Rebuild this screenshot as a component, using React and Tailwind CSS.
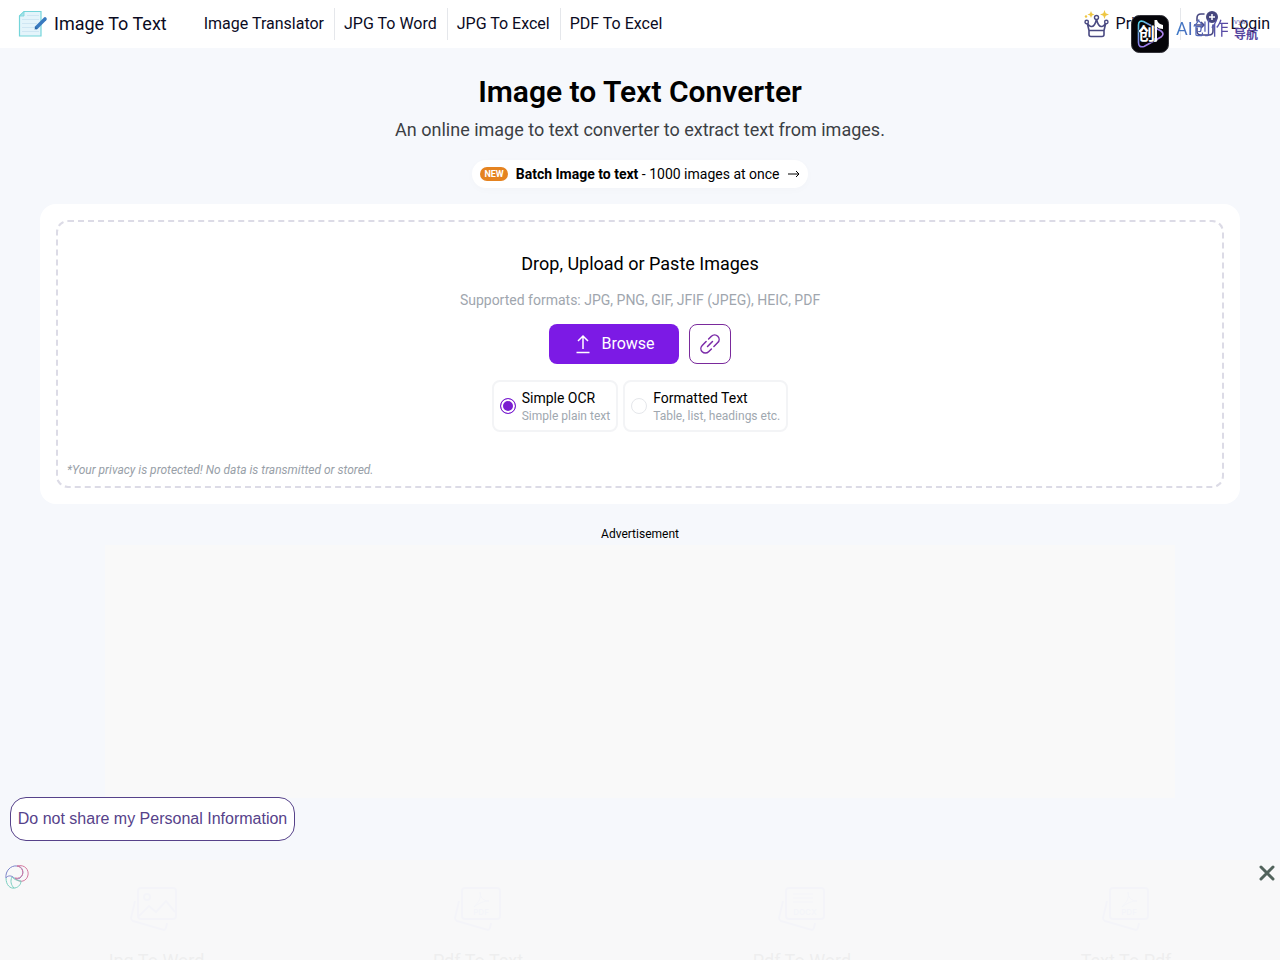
import { useState } from "react";

const navLinks = ["Image Translator", "JPG To Word", "JPG To Excel", "PDF To Excel"];

const modes = [
  { id: "simple", title: "Simple OCR", hint: "Simple plain text" },
  { id: "formatted", title: "Formatted Text", hint: "Table, list, headings etc." },
];

const tools = [
  { name: "Jpg To Word", kind: "image" },
  { name: "Pdf To Text", kind: "pdf" },
  { name: "Pdf To Word", kind: "docx" },
  { name: "Text To Pdf", kind: "pdf" },
];

const LogoIcon = () => (
  <svg viewBox="0 0 30 28" className="h-7 w-[30px]" fill="none" aria-hidden="true">
    <path d="M6 1.500H23V26H1.500V6z" fill="#e4f4fb" stroke="#74d5da" strokeWidth="1.200" />
    <path d="M6 1.500V6H1.500z" fill="#a9e2ea" stroke="#74d5da" strokeWidth="0.800" />
    <path d="M9 5.500h12M4 9.500h17M4 13.500h15M4 17.500h12M4 21.500h17" stroke="#cfe6f3" />
    <path d="M18.500 17.500l8.500-8.500" stroke="#397abf" strokeWidth="3.600" strokeLinecap="round" />
    <path d="M16.500 19.500l3-.8-2-2z" fill="#2a64a4" />
  </svg>
);

const CrownIcon = () => (
  <svg viewBox="0 0 26 28" className="h-7 w-[26px]" fill="none" aria-hidden="true">
    <path
      d="M5 20.500L3 12q2 5 5 4.500 3-.5 4.500-7.500 1.500 7 4.500 7.500 3 .5 5-4.500l-2 8.500zM5 20.500v4q0 2 2 2h11q2 0 2-2v-4"
      stroke="#4a4a82"
      strokeWidth="1.600"
      strokeLinejoin="round"
    />
    <g fill="#fff" stroke="#4a4a82" strokeWidth="1.400">
      <circle cx="2.700" cy="12" r="1.700" />
      <circle cx="12.500" cy="7.500" r="2" />
      <circle cx="22.300" cy="12" r="1.700" />
    </g>
    <g fill="#eec643">
      <path d="M7 1l1 2.500L10.500 4.500 8 5.500 7 8 6 5.500 3.500 4.500 6 3.500z" />
      <path d="M20.500 0l1.200 3.300L25 4.500l-3.300 1.200L20.500 9l-1.200-3.300L16 4.500l3.300-1.200z" />
      <circle cx="2" cy="6.500" r="1.200" />
    </g>
  </svg>
);

const LoginIcon = () => (
  <svg viewBox="0 0 26 28" className="h-7 w-[26px]" fill="none" aria-hidden="true">
    <path
      d="M11 4H8Q4 4 4 8v3M4 18v3q0 4 4 4h8q4 0 4-4v-6"
      stroke="#4a4a82"
      strokeWidth="1.600"
      strokeLinecap="round"
    />
    <path d="M1 15h10m-3-3l3 3-3 3" stroke="#4a4a82" strokeWidth="1.500" />
    <circle cx="19" cy="7" r="6" fill="#46467d" />
    <path d="M19 4v6M16 7h6" stroke="#fff" strokeWidth="1.500" />
  </svg>
);

const BadgeIcon = () => (
  <svg viewBox="0 0 38 38" className="h-[38px] w-[38px]" fill="none" aria-hidden="true">
    <defs>
      <linearGradient id="play" x1="6" y1="6" x2="32" y2="30" gradientUnits="userSpaceOnUse">
        <stop stopColor="#49dce5" />
        <stop offset="0.500" stopColor="#8b7bea" />
        <stop offset="1" stopColor="#c88bef" />
      </linearGradient>
    </defs>
    <rect x="0.500" y="0.500" width="37" height="37" rx="8" fill="#050509" stroke="#33333a" />
    <path
      d="M7.500 10q0-5 5-3.500L30 16q4 3 0 6L13 31.500q-5.500 1.500-5.500-4z"
      stroke="url(#play)"
      strokeWidth="1.600"
    />
    <path d="M23.500 5h2.500q1 4 6 5v4q-4 0-6-2v13h-2.500z" fill="#fff" />
    <ellipse cx="24" cy="25" rx="2.500" ry="2" fill="#fff" />
    <text
      x="15.500"
      y="25"
      textAnchor="middle"
      fill="#fff"
      stroke="#050509"
      strokeWidth="1"
      paintOrder="stroke"
      fontSize="17"
      fontWeight="700"
      fontFamily="Noto Sans CJK SC, sans-serif"
    >
      创
    </text>
  </svg>
);

const SwirlIcon = () => (
  <svg viewBox="0 0 24 24" className="h-6 w-6" fill="none" strokeWidth="1" aria-hidden="true">
    <path d="M1 13C0 6 6 0 12 1c6 0 8 8 3 12-3 2-6 0-7-1-3-2-6-1-7 1z" stroke="#7b83c9" />
    <path d="M12 1c8-2 12 4 11 9-1 6-8 9-13 3 9 2 11-10 2-12z" stroke="#d4789f" />
    <path d="M1 13c0 7 4 11 9 10 4-1 6-4 6-7-5 0-8-3-9-4-2 4-1 8 2 11" stroke="#79cdbf" />
  </svg>
);

const ToolIcon = ({ kind }) => (
  <svg viewBox="0 0 48 46" className="h-[46px] w-12" fill="none" stroke="#dcdffa" strokeWidth="2">
    <path d="M5 14L1 31q0 2 2 3l31 9q2 0 3-7" />
    <rect x="8" y="1" width="38" height="31" rx="3" />
    {kind === "image" && (
      <>
        <circle cx="17" cy="10" r="3" />
        <path d="M9 29l10-10 7 6 10-11 9 11" />
      </>
    )}
    {kind === "pdf" && <path d="M26 5c2 8-4 12-6 15 5-4 10-6 15-6-6 0-9-4-9-9z" strokeWidth="1" />}
    {kind === "docx" && <path d="M15 7h20M15 11h20M15 15h20" strokeWidth="1" />}
    {kind !== "image" && (
      <text
        x="27"
        y="28"
        textAnchor="middle"
        fill="#dcdffa"
        stroke="none"
        fontSize="8"
        fontWeight="700"
        fontFamily="Inter, sans-serif"
      >
        {kind.toUpperCase()}
      </text>
    )}
  </svg>
);

const Header = () => (
  <header className="relative flex h-12 items-center justify-between bg-white pl-[18px] pr-[10px] text-[#0b0b1f]">
    <div className="flex items-center">
      <a href="#home" className="flex items-center gap-[6px] text-lg">
        <LogoIcon />
        Image To Text
      </a>
      <nav className="ml-7 flex divide-x divide-gray-200">
        {navLinks.map((link) => (
          <a key={link} href="#tool" className="pl-[9px] pr-[10px] text-base leading-8">
            {link}
          </a>
        ))}
      </nav>
    </div>

    <div className="flex items-center">
      <a href="#pricing" className="flex w-24 items-center gap-[6px] text-base leading-8">
        <CrownIcon />
        Pricing
      </a>
      <a
        href="#login"
        className="flex items-center gap-3 border-l border-gray-200 pl-3 text-base leading-8"
      >
        <LoginIcon />
        Login
      </a>
    </div>

    {/* floating site badge, sits over the header links */}
    <div className="absolute right-[22px] top-[15px] z-10 flex items-start gap-[7px] font-['Roboto','Noto_Sans_CJK_SC',sans-serif]">
      <BadgeIcon />
      <div className="flex items-start">
        <span className="w-[58px] whitespace-nowrap bg-linear-to-r from-[#3f7bc8] to-[#5a3f9e] bg-clip-text text-lg leading-7 text-transparent">
          AI创作
        </span>
        <span className="flex w-6 flex-col whitespace-nowrap text-[#55449f]">
          <span className="text-[8px] leading-[14px] text-[#7676b8]">vyin</span>
          <span className="text-xs font-bold leading-3">导航</span>
        </span>
      </div>
    </div>
  </header>
);

const Uploader = () => {
  const [mode, setMode] = useState("simple");

  return (
    <section className="mx-10 mt-4 rounded-2xl bg-white p-4">
      <div className="flex flex-col items-center rounded-xl border-2 border-dashed border-[#dcdbe6] pt-7">
        <h2 className="text-lg leading-7 text-black">Drop, Upload or Paste Images</h2>
        <p className="mt-3 text-sm leading-5 text-[#a0a6ae]">
          Supported formats: JPG, PNG, GIF, JFIF (JPEG), HEIC, PDF
        </p>

        <div className="mt-[14px] flex gap-[10px]">
          <button
            type="button"
            className="flex h-10 w-[130px] items-center justify-center gap-2 rounded-lg bg-[#7c1ae5] text-base text-white"
          >
            <svg viewBox="0 0 20 20" className="h-5 w-5" fill="none" stroke="currentColor">
              <path d="M10 15V2M5 7l5-5 5 5M3.500 18.500h13" strokeWidth="1.500" />
            </svg>
            Browse
          </button>
          <button
            type="button"
            aria-label="Upload from URL"
            className="flex h-10 w-[42px] items-center justify-center rounded-lg border border-[#7a2a9c] bg-white text-[#7a2aa8]"
          >
            <svg
              viewBox="0 0 24 24"
              className="h-6 w-6"
              fill="none"
              stroke="currentColor"
              strokeWidth="1.500"
              strokeLinecap="round"
            >
              <g transform="rotate(-45 12 12)">
                <path d="M9.500 16.500H5.500a4.500 4.500 0 0 1 0-9H11M14.500 7.500h4a4.500 4.500 0 0 1 0 9H13M8.500 12h7" />
              </g>
            </svg>
          </button>
        </div>

        <div className="mt-4 flex gap-[5px]">
          {modes.map((item) => (
            <label
              key={item.id}
              className="flex h-[52px] items-center gap-[6px] rounded-lg border-2 border-gray-100 px-[6px]"
            >
              <input
                type="radio"
                name="mode"
                value={item.id}
                checked={mode === item.id}
                onChange={() => setMode(item.id)}
                className="h-4 w-4 appearance-none rounded-full border border-gray-200 bg-white checked:border-[#7a1fd0] checked:bg-[#7a1fd0] checked:shadow-[inset_0_0_0_2px_white]"
              />
              <span className="flex flex-col pt-[2px]">
                <span className="text-sm leading-[18px] text-black">{item.title}</span>
                <span className="text-xs leading-[18px] text-[#a0a8b0]">{item.hint}</span>
              </span>
            </label>
          ))}
        </div>

        <p className="mt-[30px] w-full px-[9px] pb-2 text-xs italic leading-4 text-[#98a0a8]">
          *Your privacy is protected! No data is transmitted or stored.
        </p>
      </div>
    </section>
  );
};

const App = () => (
  <div className="h-screen overflow-hidden bg-[#f6f8fc] font-['Roboto',sans-serif]">
    <Header />

    <main>
      <div className="flex flex-col items-center pt-6">
        <h1 className="text-3xl font-semibold leading-10 text-black">Image to Text Converter</h1>
        <p className="mt-1 text-lg leading-7 text-[#3c3f44]">
          An online image to text converter to extract text from images.
        </p>
        <a
          href="#batch"
          className="mt-4 flex h-7 items-center rounded-full bg-white px-2 text-sm text-black shadow-[0_2px_8px_rgba(0,0,0,0.02)]"
        >
          <span className="mr-2 rounded-full bg-[#e58320] px-1 text-[9px] font-bold leading-[14px] text-white">
            NEW
          </span>
          <b className="font-bold">Batch Image to text</b>
          <span className="whitespace-pre"> - 1000 images at once</span>
          <svg viewBox="0 0 12 12" className="ml-2 h-3 w-3" fill="none" stroke="currentColor">
            <path d="M0 6h11M8 3l3 3-3 3" />
          </svg>
        </a>
      </div>

      <Uploader />

      <section className="mt-[22px] text-center">
        <p className="text-xs leading-4 text-black">Advertisement</p>
        <div className="mx-auto mt-[3px] h-[253px] max-w-[1070px] bg-[#f9f9f9]" />
      </section>

      <section className="mt-[89px] grid grid-cols-4 gap-12 px-4">
        {tools.map((tool) => (
          <a key={tool.name} href="#tool" className="flex flex-col items-center">
            <ToolIcon kind={tool.kind} />
            <span className="mt-[14px] text-lg leading-7 text-[#b4b4b8]">{tool.name}</span>
          </a>
        ))}
      </section>
    </main>

    <button
      type="button"
      className="fixed bottom-[119px] left-[10px] h-11 w-[285px] rounded-2xl border border-[#56428a] bg-white font-['Liberation_Sans',sans-serif] text-base text-[#56428a]"
    >
      Do not share my Personal Information
    </button>

    {/* sticky bottom ad strip, lets the tool cards show through */}
    <aside className="fixed inset-x-0 bottom-0 flex h-[100px] items-start justify-between bg-[#f8f8f8]/85 px-[5px] pt-[5px]">
      <SwirlIcon />
      <button type="button" aria-label="Close" className="text-[#52635c]">
        <svg viewBox="0 0 16 16" className="h-4 w-4" stroke="currentColor" strokeWidth="3">
          <path d="M2 2l12 12M14 2L2 14" strokeLinecap="round" />
        </svg>
      </button>
    </aside>
  </div>
);

export default App;
